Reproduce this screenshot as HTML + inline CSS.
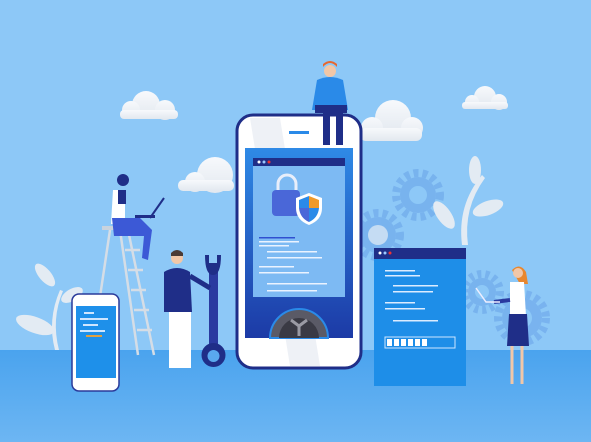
<!DOCTYPE html><html><head><style>html,body{margin:0;padding:0;width:591px;height:442px;overflow:hidden;background:#8dc8f7}</style></head><body>
<svg width="591" height="442" viewBox="0 0 591 442" xmlns="http://www.w3.org/2000/svg">
<defs>
<linearGradient id="scr" x1="0" y1="0" x2="0" y2="1"><stop offset="0" stop-color="#2f8ae6"/><stop offset="1" stop-color="#1c3aa6"/></linearGradient>
<linearGradient id="fl" x1="0" y1="0" x2="0" y2="1"><stop offset="0" stop-color="#4aa3ee"/><stop offset="1" stop-color="#6db6f3"/></linearGradient>
<linearGradient id="cl" x1="0" y1="0" x2="0" y2="1"><stop offset="0" stop-color="#f7f9fc"/><stop offset="1" stop-color="#e2e8ef"/></linearGradient>
</defs>
<rect width="591" height="442" fill="#8dc8f7"/>
<rect y="350" width="591" height="92" fill="url(#fl)"/>
<!-- clouds -->
<g fill="url(#cl)">
<circle cx="146" cy="105" r="14"/><circle cx="131" cy="110" r="9"/><circle cx="165" cy="110" r="10"/><rect x="120" y="110" width="58" height="9" rx="4"/>
<circle cx="393" cy="118" r="18"/><circle cx="372" cy="128" r="11"/><circle cx="412" cy="128" r="11"/><rect x="360" y="128" width="62" height="13" rx="6"/>
<circle cx="485" cy="97" r="11"/><circle cx="472" cy="102" r="7"/><circle cx="499" cy="102" r="8"/><rect x="462" y="102" width="46" height="7" rx="3"/>
<circle cx="215" cy="175" r="18"/><circle cx="195" cy="182" r="10"/><rect x="178" y="180" width="56" height="11" rx="5"/>
</g>
<!-- gears bg -->
<g fill="none" stroke="#74aeec" opacity="0.8">
<circle cx="418" cy="195" r="22" stroke-width="8" stroke-dasharray="5 4"/>
<circle cx="378" cy="235" r="22" stroke-width="8" stroke-dasharray="5 4"/>
<circle cx="522" cy="318" r="24" stroke-width="8" stroke-dasharray="5 4"/>
<circle cx="482" cy="292" r="18" stroke-width="8" stroke-dasharray="4 4"/>
</g>
<g fill="#74aeec" opacity="0.8">
<circle cx="418" cy="195" r="18"/><circle cx="378" cy="235" r="18"/><circle cx="522" cy="318" r="20"/><circle cx="482" cy="292" r="14"/>
</g>
<g fill="#8dc8f7"><circle cx="418" cy="195" r="9"/><circle cx="522" cy="318" r="10"/><circle cx="482" cy="292" r="7"/></g>
<circle cx="378" cy="235" r="10" fill="#c5dcf3"/>
<!-- plants -->
<g fill="#e3ebf3">
<path d="M462 245 q-5-40 20-70 l3 3 q-22 30-17 67z"/>
<ellipse cx="475" cy="170" rx="6" ry="14"/>
<ellipse cx="488" cy="208" rx="16" ry="7" transform="rotate(-20 488 208)"/>
<ellipse cx="444" cy="215" rx="7" ry="16" transform="rotate(-35 444 215)"/>
<path d="M55 350 q-8-30 5-60 l3 1 q-12 28-4 59z"/>
<ellipse cx="45" cy="275" rx="6" ry="14" transform="rotate(-40 45 275)"/>
<ellipse cx="35" cy="325" rx="20" ry="8" transform="rotate(20 35 325)"/>
<ellipse cx="72" cy="295" rx="12" ry="6" transform="rotate(-30 72 295)"/>
</g>
<!-- ladder -->
<g stroke="#d5dde6" stroke-width="2.5" fill="none">
<line x1="110" y1="230" x2="95" y2="330"/><line x1="120" y1="230" x2="138" y2="355"/><line x1="128" y1="230" x2="154" y2="355"/>
<line x1="125" y1="250" x2="140" y2="250"/><line x1="128" y1="270" x2="143" y2="270"/><line x1="131" y1="290" x2="146" y2="290"/><line x1="134" y1="310" x2="149" y2="310"/><line x1="137" y1="330" x2="152" y2="330"/>
</g>
<rect x="102" y="226" width="30" height="4" fill="#c9d3dd"/>
<!-- sitting guy on ladder -->
<path d="M113 190 h12 v34 h-14z" fill="#fff"/><rect x="118" y="190" width="8" height="14" fill="#1f2e88"/>
<circle cx="123" cy="180" r="6" fill="#1f2e88"/>
<path d="M112 218 h28 l12 12 -4 30 -6 -2 2-22 h-30z" fill="#3c59d6"/>
<path d="M150 218 l14-20" stroke="#1f2e88" stroke-width="2"/><rect x="135" y="215" width="20" height="3" fill="#1f2e88"/>
<!-- small phone -->
<rect x="72" y="294" width="47" height="97" rx="7" fill="#fff" stroke="#2a3a9a" stroke-width="1.5"/>
<rect x="76" y="306" width="40" height="72" fill="#1e90ea"/>
<g fill="#cfe6ff"><rect x="84" y="312" width="10" height="2"/><rect x="80" y="318" width="28" height="2"/><rect x="83" y="324" width="15" height="2"/><rect x="80" y="330" width="25" height="2"/></g>
<rect x="86" y="335" width="16" height="2" fill="#e0a040"/>
<!-- wrench -->
<rect x="209" y="272" width="9" height="72" fill="#2a3aa0"/>
<path d="M205 255 q0 20 8 20 q8 0 8-20 l-4 0 v8 h-8 v-8z" fill="#1f2e88"/>
<circle cx="213.5" cy="355" r="12" fill="#1f2e88"/><circle cx="213.5" cy="356" r="6" fill="#5aa8ee"/>
<!-- bearded man -->
<circle cx="177" cy="258" r="6" fill="#f1c7a8"/><path d="M171 253 q6-6 12 0 v3 h-12z" fill="#4a3a35"/>
<path d="M164 272 q13-8 26 0 l2 40 h-28z" fill="#1f2e88"/>
<path d="M190 276 l20 12" stroke="#1f2e88" stroke-width="5"/>
<rect x="169" y="312" width="22" height="56" fill="#fff"/>
<!-- main phone -->
<rect x="237" y="115" width="124" height="253" rx="16" fill="#fff" stroke="#1f2e88" stroke-width="3"/>
<path d="M250 118 l30 0 l40 248 l-30 0z" fill="#eef1f6"/>
<rect x="289" y="131" width="20" height="3" fill="#2a8ae8"/>
<rect x="245" y="148" width="108" height="190" fill="url(#scr)"/>
<rect x="253" y="158" width="92" height="139" fill="#7dbaf3"/>
<rect x="253" y="158" width="92" height="8" fill="#1f2e88"/>
<circle cx="259" cy="162" r="1.5" fill="#fff"/><circle cx="264" cy="162" r="1.5" fill="#9cc8ff"/><circle cx="269" cy="162" r="1.5" fill="#e33"/>
<path d="M278 190 v-6 a9 9 0 0 1 18 0 v6" stroke="#e8eefa" stroke-width="3" fill="none"/>
<rect x="272" y="190" width="28" height="26" rx="4" fill="#4a67d8"/>
<path d="M309 193 l13 5 v10 q0 12 -13 17 q-13-5-13-17 v-10z" fill="#fff"/>
<path d="M309 196 v12 h-10 v-8z" fill="#2a8ae8"/><path d="M309 196 l10 4 v8 h-10z" fill="#f09a2a"/><path d="M299 208 h10 v14 q-9-4-10-14z" fill="#4a67d8"/><path d="M309 208 h10 q-1 10-10 14z" fill="#2a8ae8"/>
<g fill="#eaf3ff"><rect x="259" y="237" width="36" height="1.5" fill="#3050d0"/><rect x="259" y="241" width="40" height="1.5"/><rect x="259" y="245" width="30" height="1.5"/><rect x="267" y="251" width="50" height="1.5"/><rect x="267" y="257" width="55" height="1.5"/><rect x="259" y="266" width="35" height="1.5"/><rect x="259" y="272" width="50" height="1.5"/><rect x="267" y="283" width="60" height="1.5"/><rect x="267" y="290" width="50" height="1.5"/></g>
<path d="M270 338 a29 29 0 0 1 58 0z" fill="#5a5a66" stroke="#2a8ae8" stroke-width="2"/>
<path d="M279 338 a20 20 0 0 1 40 0z" fill="#3a3a44"/>
<path d="M299 326 l-8 -6 M299 326 l8 -6 M299 326 v10" stroke="#9a9aa4" stroke-width="3"/>
<!-- man on top -->
<circle cx="330" cy="71" r="6" fill="#f1c7a8"/><path d="M323 67 q7-8 14 0 v-3 q-7-6-14 0z" fill="#e8672e"/>
<path d="M317 80 q13-6 26 0 l5 30 h-36z" fill="#2a8ae8"/>
<path d="M315 105 h32 v8 h-4 v32 h-7 v-30 h-6 v30 h-7 v-32 h-8z" fill="#1f2e88"/>
<!-- right window -->
<rect x="374" y="248" width="92" height="138" fill="#1e8ee8"/>
<rect x="374" y="248" width="92" height="11" fill="#1f2e88"/>
<circle cx="380" cy="253" r="1.5" fill="#fff"/><circle cx="385" cy="253" r="1.5" fill="#9cc8ff"/><circle cx="390" cy="253" r="1.5" fill="#e33"/>
<g fill="#dcecff"><rect x="385" y="270" width="30" height="1.5"/><rect x="385" y="275" width="35" height="1.5"/><rect x="393" y="285" width="45" height="1.5"/><rect x="393" y="291" width="40" height="1.5"/><rect x="385" y="302" width="30" height="1.5"/><rect x="385" y="308" width="40" height="1.5"/><rect x="393" y="320" width="45" height="1.5"/></g>
<rect x="385" y="337" width="70" height="11" fill="none" stroke="#cfe6ff" stroke-width="1"/>
<g fill="#fff"><rect x="387" y="339" width="5" height="7"/><rect x="394" y="339" width="5" height="7"/><rect x="401" y="339" width="5" height="7"/><rect x="408" y="339" width="5" height="7"/><rect x="415" y="339" width="5" height="7"/><rect x="422" y="339" width="5" height="7"/></g>
<!-- woman -->
<path d="M512 270 q8-8 14 2 l2 12 h-8z" fill="#e8872e"/>
<circle cx="518" cy="273" r="5" fill="#f1c7a8"/>
<path d="M510 282 h14 l2 34 h-16z" fill="#fff"/>
<path d="M509 314 h18 l2 32 h-22z" fill="#1f2e88"/>
<path d="M512 346 v38 M522 346 v38" stroke="#f1c7a8" stroke-width="3"/>
<path d="M510 300 l-16 2" stroke="#2a3aa0" stroke-width="4"/>
<path d="M476 288 l10 14 h14" stroke="#eef" stroke-width="1.5" fill="none"/>
</svg>
</body></html>
